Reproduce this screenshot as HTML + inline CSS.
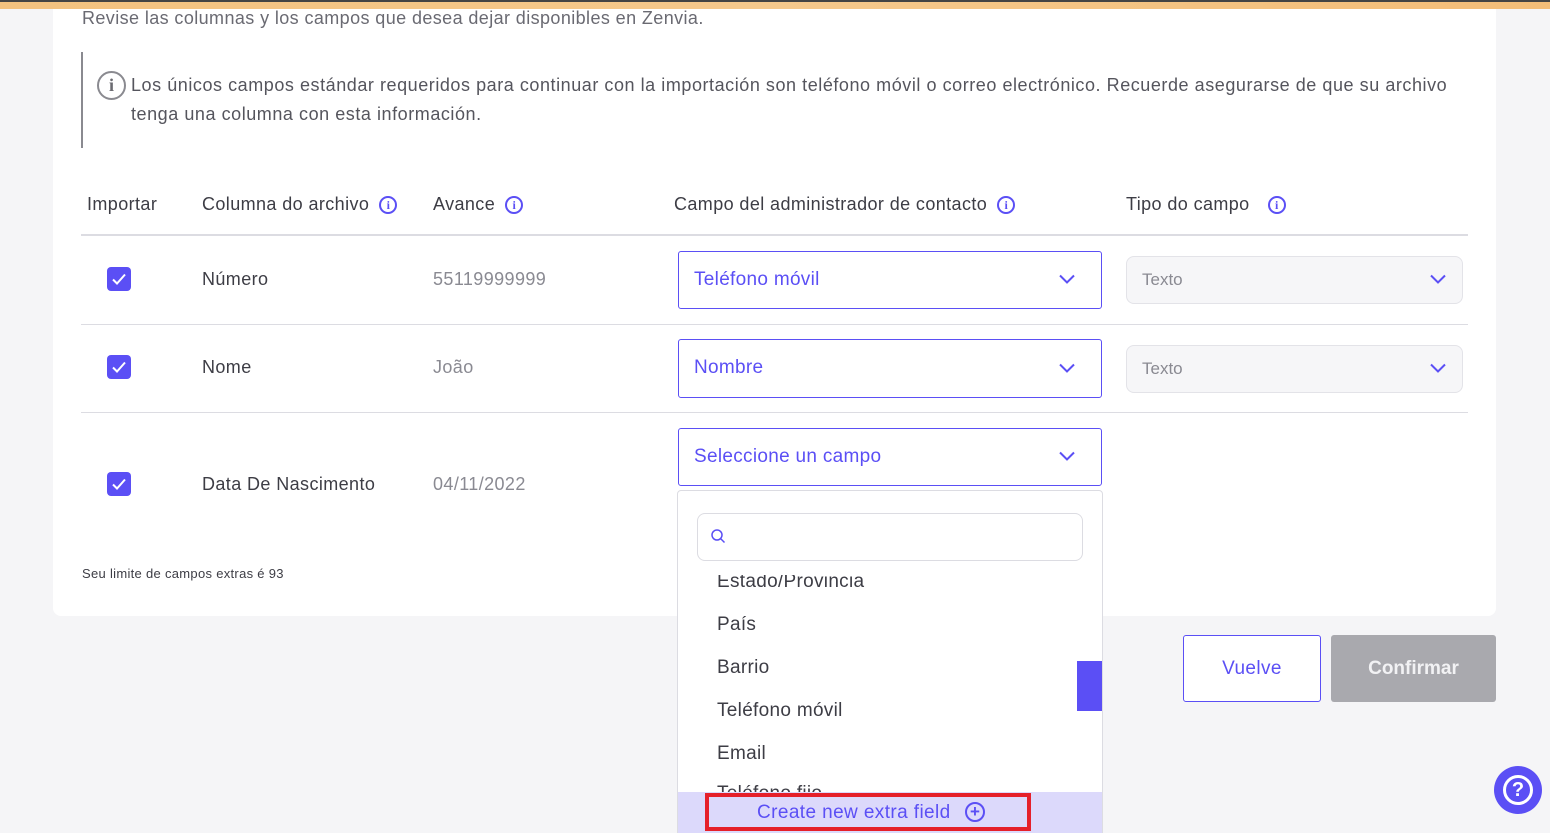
<!DOCTYPE html>
<html><head><meta charset="utf-8"><style>
*{box-sizing:border-box;margin:0;padding:0}
html,body{width:1550px;height:833px;overflow:hidden}
body{background:#f5f5f7;font-family:"Liberation Sans",sans-serif;color:#3d3d45;position:relative}
.a{position:absolute}
.topbar{left:0;top:0;width:1550px;height:9px;background:linear-gradient(90deg,#f3c27f,#f6c98c 50%,#f3bd78);border-top:2px solid #444}
.card{left:53px;top:9px;width:1443px;height:607px;background:#fff;border-radius:0 0 8px 8px}
.t{font-size:18px;white-space:nowrap;letter-spacing:0.4px}
.info{display:inline-block;width:18px;height:18px;border:2px solid #5b4ff5;border-radius:50%;color:#5b4ff5;font-size:12px;font-weight:bold;text-align:center;line-height:14px;font-family:"Liberation Serif",serif;vertical-align:1px;margin-left:10px;letter-spacing:0}
.hr{height:1px;background:#dcdce2}
.cb{width:24px;height:24px;background:#5b4ff5;border-radius:4px}
.sel{border:1px solid #5b4ff5;border-radius:3px;background:#fff;color:#5b4ff5;font-size:19px;padding-left:15px;line-height:56px;letter-spacing:0.3px}
.tsel{border:1px solid #e3e3e8;border-radius:8px;background:#f6f6f8;color:#8a8a92;font-size:17px;padding-left:15px;line-height:46px}
.chev{position:absolute;right:26px;top:50%;margin-top:-6px}
.item{left:717px;font-size:19px;color:#3d3d45;letter-spacing:0.3px}
</style></head><body>
<div class="a topbar"></div>
<div class="a card"></div>
<div class="a t" style="left:82px;top:8px;color:#6a6a72">Revise las columnas y los campos que desea dejar disponibles en Zenvia.</div>
<div class="a" style="left:81px;top:52px;width:2px;height:96px;background:#8a8a90"></div>
<div class="a" style="left:97px;top:71px;width:29px;height:29px;border:2.5px solid #8a8a90;border-radius:50%;text-align:center;font:bold 18px/24px 'Liberation Serif',serif;color:#6a6a70">i</div>
<div class="a t" style="left:131px;top:71px;line-height:29px;color:#55555d;letter-spacing:0.55px">Los únicos campos estándar requeridos para continuar con la importación son teléfono móvil o correo electrónico. Recuerde asegurarse de que su archivo<br>tenga una columna con esta información.</div>

<div class="a t" style="left:87px;top:194px">Importar</div>
<div class="a t" style="left:202px;top:194px">Columna do archivo<span class="info">i</span></div>
<div class="a t" style="left:433px;top:194px">Avance<span class="info">i</span></div>
<div class="a t" style="left:674px;top:194px">Campo del administrador de contacto<span class="info">i</span></div>
<div class="a t" style="left:1126px;top:194px">Tipo do campo<span class="info" style="margin-left:18px">i</span></div>
<div class="a hr" style="left:81px;top:234px;width:1387px;height:2px"></div>

<svg width="0" height="0" style="position:absolute"><defs><symbol id="ck" viewBox="0 0 24 24"><path d="M6 12.5l4 4 8-9" fill="none" stroke="#fff" stroke-width="2"/></symbol><symbol id="cv" viewBox="0 0 16 10"><path d="M1 1.5l7 7 7-7" fill="none" stroke="#5b4ff5" stroke-width="2"/></symbol></defs></svg>

<div class="a cb" style="left:107px;top:267px"><svg width="24" height="24"><use href="#ck"/></svg></div>
<div class="a t" style="left:202px;top:269px">Número</div>
<div class="a t" style="left:433px;top:269px;color:#8a8a92">55119999999</div>
<div class="a sel" style="left:678px;top:251px;width:424px;height:58px">Teléfono móvil<svg class="chev" width="16" height="10"><use href="#cv"/></svg></div>
<div class="a tsel" style="left:1126px;top:256px;width:337px;height:48px">Texto<svg class="chev" width="16" height="10" style="right:16px"><use href="#cv"/></svg></div>
<div class="a hr" style="left:81px;top:324px;width:1387px"></div>

<div class="a cb" style="left:107px;top:355px"><svg width="24" height="24"><use href="#ck"/></svg></div>
<div class="a t" style="left:202px;top:357px">Nome</div>
<div class="a t" style="left:433px;top:357px;color:#8a8a92">João</div>
<div class="a sel" style="left:678px;top:339px;width:424px;height:59px">Nombre<svg class="chev" width="16" height="10"><use href="#cv"/></svg></div>
<div class="a tsel" style="left:1126px;top:345px;width:337px;height:48px">Texto<svg class="chev" width="16" height="10" style="right:16px"><use href="#cv"/></svg></div>
<div class="a hr" style="left:81px;top:412px;width:1387px"></div>

<div class="a cb" style="left:107px;top:472px"><svg width="24" height="24"><use href="#ck"/></svg></div>
<div class="a t" style="left:202px;top:474px">Data De Nascimento</div>
<div class="a t" style="left:433px;top:474px;color:#8a8a92">04/11/2022</div>
<div class="a sel" style="left:678px;top:428px;width:424px;height:58px">Seleccione un campo<svg class="chev" width="16" height="10"><use href="#cv"/></svg></div>

<div class="a" style="left:82px;top:566px;font-size:13px;color:#3d3d45;letter-spacing:0.3px">Seu limite de campos extras é 93</div>

<div class="a" style="left:677px;top:490px;width:426px;height:350px;background:#fff;border:1px solid #dcdce2;border-radius:4px;overflow:hidden">
  <div class="a" style="left:19px;top:22px;width:386px;height:48px;border:1px solid #dcdce2;border-radius:8px">
    <svg class="a" style="left:12px;top:14px" width="18" height="18" viewBox="0 0 18 18"><circle cx="7" cy="7" r="5" fill="none" stroke="#5b4ff5" stroke-width="1.5"/><path d="M10.5 10.5l4 4" stroke="#5b4ff5" stroke-width="1.5"/></svg>
  </div>
  <div class="a" style="left:399px;top:170px;width:25px;height:50px;background:#5b4ff5"></div>
</div>
<div class="a item" style="top:571px;clip-path:inset(4px 0 0 0)">Estado/Provincia</div>
<div class="a item" style="top:614px">País</div>
<div class="a item" style="top:657px">Barrio</div>
<div class="a item" style="top:700px">Teléfono móvil</div>
<div class="a item" style="top:743px">Email</div>
<div class="a item" style="top:783px">Teléfono fijo</div>
<div class="a" style="left:678px;top:792px;width:424px;height:41px;background:#dcd9fb"></div>
<div class="a" style="left:705px;top:793px;width:326px;height:38px;border:4px solid #e5202a"></div>
<div class="a" style="left:757px;top:802px;font-size:19px;color:#5b4ff5;letter-spacing:0.4px">Create new extra field</div>
<div class="a" style="left:965px;top:802px;width:20px;height:20px;border:2px solid #5b4ff5;border-radius:50%;color:#5b4ff5;text-align:center;font:bold 17px/16px 'Liberation Sans',sans-serif">+</div>

<div class="a" style="left:1183px;top:635px;width:138px;height:67px;border:1px solid #5b4ff5;border-radius:3px;background:#fff;color:#5b4ff5;font-size:19px;text-align:center;line-height:65px;letter-spacing:0.4px">Vuelve</div>
<div class="a" style="left:1331px;top:635px;width:165px;height:67px;border-radius:3px;background:#a9a9ae;color:#f2f2f4;font-size:19px;font-weight:bold;text-align:center;line-height:67px">Confirmar</div>

<div class="a" style="left:1494px;top:766px;width:48px;height:48px;border-radius:50%;background:#5b4ff5"></div>
<div class="a" style="left:1503px;top:775px;width:30px;height:30px;border:3px solid #fff;border-radius:50%;color:#fff;text-align:center;font:bold 20px/25px 'Liberation Sans',sans-serif">?</div>
</body></html>
